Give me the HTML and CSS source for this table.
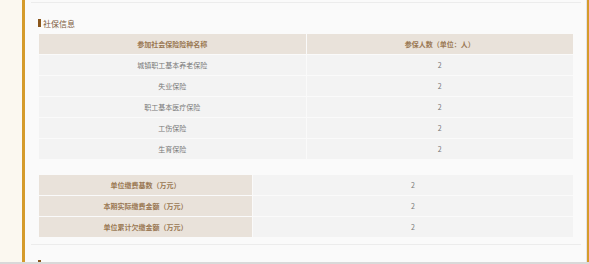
FILE: index.html
```html
<!DOCTYPE html>
<html lang="zh-CN">
<head>
<meta charset="utf-8">
<title>社保信息</title>
<link rel="stylesheet" href="styles.css">
</head>
<body>
<div class="frame">
  <div class="panel">
    <div class="box box-prev"></div>
    <div class="box">
      <h3 class="sec-title"><span class="mark"></span>社保信息</h3>
      <table class="grid grid-main">
        <thead>
          <tr><th>参加社会保险险种名称</th><th>参保人数（单位：人）</th></tr>
        </thead>
        <tbody>
          <tr><td>城镇职工基本养老保险</td><td>2</td></tr>
          <tr><td>失业保险</td><td>2</td></tr>
          <tr><td>职工基本医疗保险</td><td>2</td></tr>
          <tr><td>工伤保险</td><td>2</td></tr>
          <tr><td>生育保险</td><td>2</td></tr>
        </tbody>
      </table>
      <table class="grid grid-side">
        <tbody>
          <tr><th>单位缴费基数（万元）</th><td>2</td></tr>
          <tr><th>本期实际缴费金额（万元）</th><td>2</td></tr>
          <tr><th>单位累计欠缴金额（万元）</th><td>2</td></tr>
        </tbody>
      </table>
    </div>
    <div class="box box-next">
      <h3 class="sec-title"><span class="mark"></span></h3>
    </div>
  </div>
</div>
<div class="scrollbar"></div>
</body>
</html>
```

FILE: styles.css
```css
html, body {
  margin: 0;
  padding: 0;
}
body {
  background: #fbf8f0;
  font-family: "Noto Sans CJK SC", "Noto Sans", sans-serif;
  height: 264px;
  overflow: hidden;
}
.frame {
  margin-left: 22px;
  width: 562px;
  border-left: 3px solid #d59b2b;
  border-right: 3px solid #d59b2b;
  background: #fafafa;
  min-height: 264px;
}
.panel {
  padding: 0 5px 0 6px;
  border-right: 1px solid #e3e3e3;
  min-height: 264px;
}
.box {
  padding: 13px 8px 7px;
  border-bottom: 1px solid #ececec;
}
.box-prev {
  height: 2px;
  padding: 0;
}
.box-next {
  border-bottom: 0;
  padding-top: 12px;
}
.sec-title {
  margin: 0;
  display: flex;
  align-items: center;
  height: 14px;
  font-size: 8px;
  font-weight: normal;
  color: #7c5b3d;
}
.mark {
  width: 3px;
  height: 8px;
  margin: 0 2px 0 -1px;
  background: #8a561c;
}
.grid {
  width: 100%;
  border-collapse: collapse;
  table-layout: fixed;
  font-size: 7px;
  text-align: center;
}
.grid-main {
  margin-top: 4px;
}
.grid-side {
  margin-top: 16px;
}
.grid th,
.grid td {
  padding: 0;
  height: 20px;
  line-height: 9px;
}
.grid th {
  background: #e9e2da;
  color: #9a7853;
  font-weight: bold;
}
.grid td {
  background: #f3f3f3;
  color: #777;
}
.grid-main thead th {
  height: 20px;
}
.grid-main th + th,
.grid td + td,
.grid th + td {
  border-left: 1px solid #fafafa;
}
.grid tr + tr th,
.grid tr + tr td,
.grid-main tbody tr:first-child td {
  border-top: 1px solid #fafafa;
}
.grid-side th {
  width: 213px;
}
.scrollbar {
  position: fixed;
  left: 0;
  right: 0;
  bottom: 0;
  height: 2px;
  background: #d9d9d9;
}
```
